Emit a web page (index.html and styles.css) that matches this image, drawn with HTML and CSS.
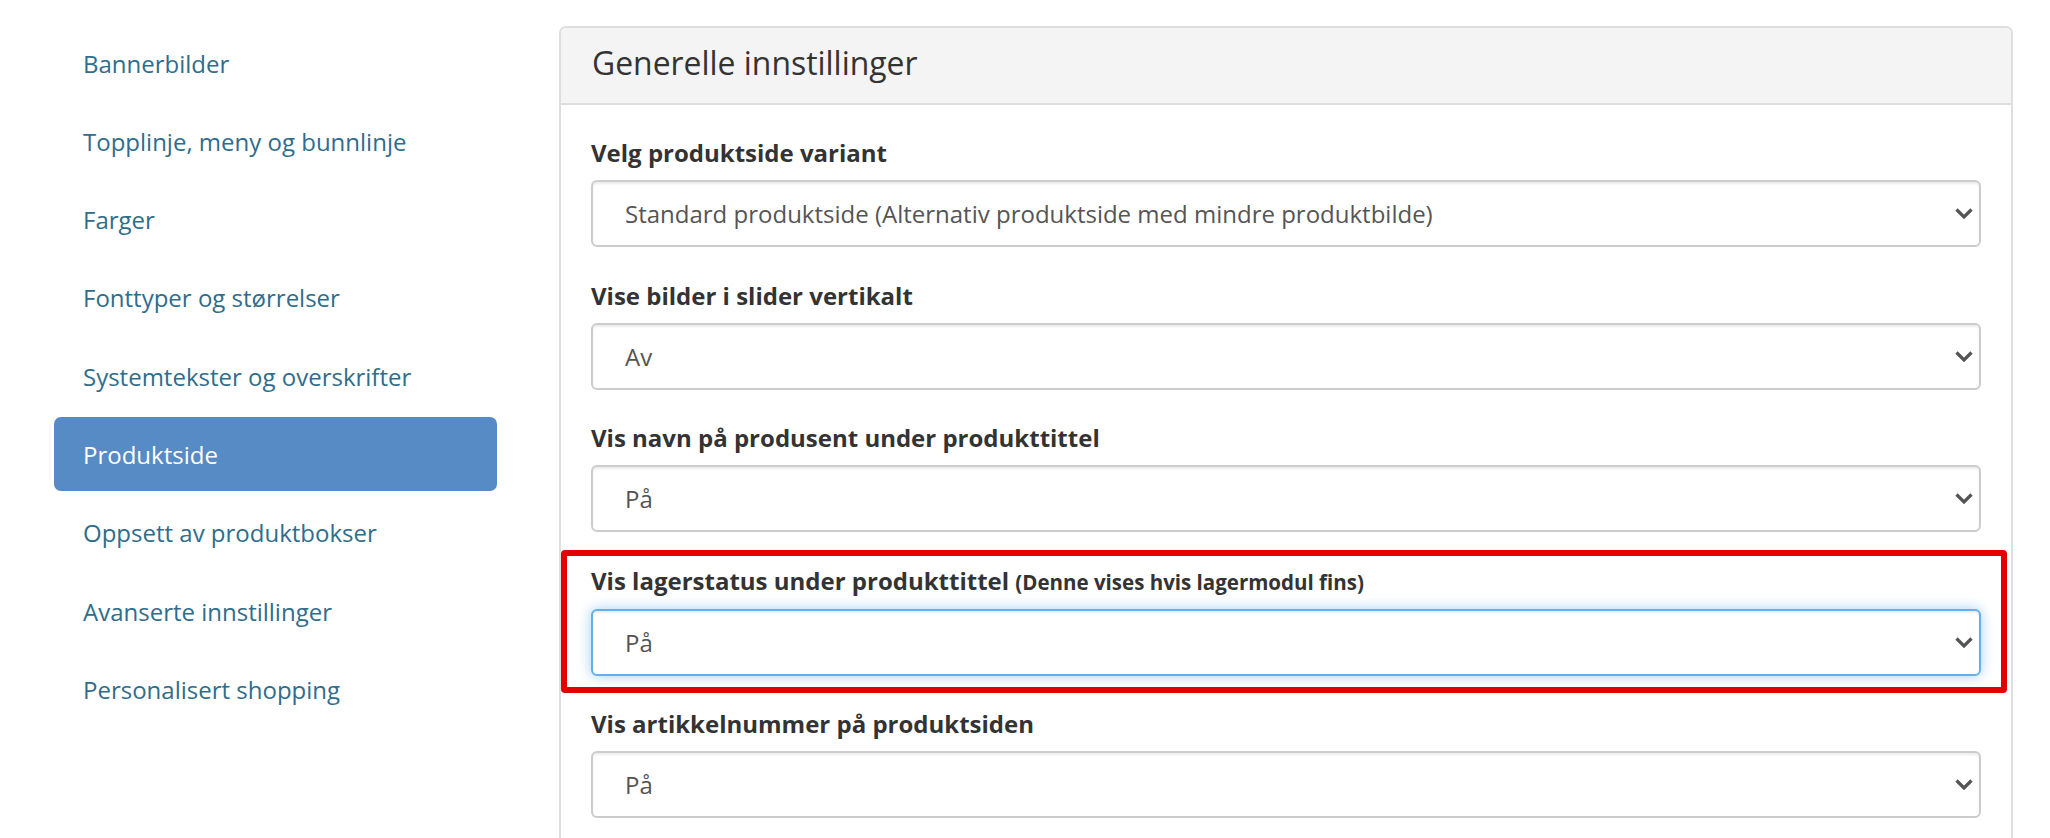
FILE: index.html
```html
<!DOCTYPE html>
<html lang="no">
<head>
<meta charset="utf-8">
<title>Produktside</title>
<link rel="stylesheet" href="styles.css">
</head>
<body>
<div class="page">
  <nav class="sidebar">
    <a class="nav-item">Bannerbilder</a>
    <a class="nav-item">Topplinje, meny og bunnlinje</a>
    <a class="nav-item">Farger</a>
    <a class="nav-item">Fonttyper og størrelser</a>
    <a class="nav-item">Systemtekster og overskrifter</a>
    <a class="nav-item active">Produktside</a>
    <a class="nav-item">Oppsett av produktbokser</a>
    <a class="nav-item">Avanserte innstillinger</a>
    <a class="nav-item">Personalisert shopping</a>
  </nav>
  <section class="card">
    <div class="card-header"><h3 class="card-title">Generelle innstillinger</h3></div>
    <div class="card-body">
      <div class="form-group">
        <label class="label">Velg produktside variant</label>
        <div class="select"><span>Standard produktside (Alternativ produktside med mindre produktbilde)</span><svg class="chev" viewBox="0 0 18 11"><polyline points="1.5,1.5 9,9 16.5,1.5"/></svg></div>
      </div>
      <div class="form-group">
        <label class="label">Vise bilder i slider vertikalt</label>
        <div class="select"><span>Av</span><svg class="chev" viewBox="0 0 18 11"><polyline points="1.5,1.5 9,9 16.5,1.5"/></svg></div>
      </div>
      <div class="form-group">
        <label class="label">Vis navn på produsent under produkttittel</label>
        <div class="select"><span>På</span><svg class="chev" viewBox="0 0 18 11"><polyline points="1.5,1.5 9,9 16.5,1.5"/></svg></div>
      </div>
      <div class="form-group highlight">
        <label class="label">Vis lagerstatus under produkttittel <small class="note">(Denne vises hvis lagermodul fins)</small></label>
        <div class="select focus"><span>På</span><svg class="chev" viewBox="0 0 18 11"><polyline points="1.5,1.5 9,9 16.5,1.5"/></svg></div>
      </div>
      <div class="form-group">
        <label class="label">Vis artikkelnummer på produktsiden</label>
        <div class="select"><span>På</span><svg class="chev" viewBox="0 0 18 11"><polyline points="1.5,1.5 9,9 16.5,1.5"/></svg></div>
      </div>
    </div>
  </section>
</div>
</body>
</html>
```
FILE: styles.css
```css
html, body {
  margin: 0;
  padding: 0;
  background: #fff;
  overflow: hidden;
}
body {
  font-family: "Open Sans", "Noto Sans", sans-serif;
  height: 838px;
}
.page {
  display: flex;
  gap: 62px;
  padding: 26px 37px 0 54px;
}
.sidebar {
  flex: none;
  width: 443px;
  display: flex;
  flex-direction: column;
  gap: 4.3px;
}
.nav-item {
  height: 74px;
  display: flex;
  align-items: center;
  padding-left: 29px;
  font-size: 24px;
  color: #2f6d8c;
  border-radius: 7px;
  text-decoration: none;
}
.nav-item.active {
  background: #568bc5;
  color: #fff;
}
.card {
  flex: 1;
  border: 2px solid #dedede;
  border-bottom: none;
  border-radius: 7px 7px 0 0;
  height: 900px;
  box-sizing: border-box;
}
.card-header {
  height: 77px;
  box-sizing: border-box;
  background: #f4f4f4;
  border-bottom: 2px solid #dedede;
  border-radius: 5px 5px 0 0;
  padding: 17px 31px 0;
}
.card-title {
  margin: 0;
  font-size: 31.9px;
  line-height: 36px;
  font-weight: 400;
  color: #333;
}
.card-body {
  padding: 32px 30px 0;
}
.form-group {
  margin-bottom: 32.5px;
}
.label {
  display: block;
  font-size: 24px;
  line-height: 32px;
  font-weight: 700;
  color: #333;
  margin-bottom: 11px;
}
.note {
  font-size: 20.5px;
  font-weight: 700;
}
.select {
  height: 67px;
  box-sizing: border-box;
  border: 2px solid #ccc;
  border-radius: 6px;
  box-shadow: inset 0 2px 2px rgba(0, 0, 0, 0.075);
  display: flex;
  align-items: center;
  padding: 0 6px 0 32px;
  font-size: 24px;
  color: #555;
  background: #fff;
}
.select.focus {
  border-color: #66afe9;
  box-shadow: inset 0 2px 2px rgba(0, 0, 0, 0.075), 0 0 13px rgba(102, 175, 233, 0.6);
}
.chev {
  width: 18px;
  height: 11px;
  margin-left: auto;
  flex: none;
}
.chev polyline {
  fill: none;
  stroke: #555;
  stroke-width: 3.2;
  stroke-linecap: butt;
  stroke-linejoin: miter;
}
.highlight {
  position: relative;
}
.highlight::after {
  content: "";
  position: absolute;
  top: -14.5px;
  bottom: -17px;
  left: -30px;
  right: -26px;
  border: 6.5px solid #e30000;
  border-radius: 4px;
  pointer-events: none;
}
```
